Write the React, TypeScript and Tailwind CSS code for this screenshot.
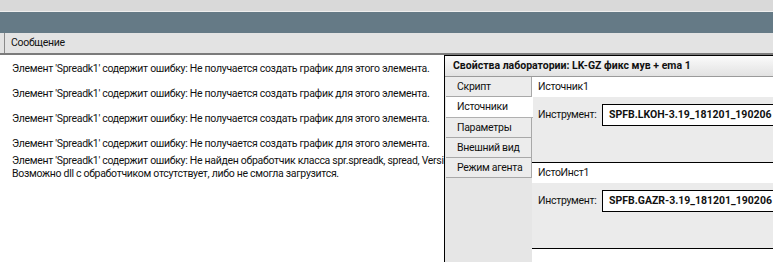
import React from "react";

const msgs = [
  "Элемент 'Spreadk1' содержит ошибку: Не получается создать график для этого элемента.",
  "Элемент 'Spreadk1' содержит ошибку: Не получается создать график для этого элемента.",
  "Элемент 'Spreadk1' содержит ошибку: Не получается создать график для этого элемента.",
  "Элемент 'Spreadk1' содержит ошибку: Не получается создать график для этого элемента.",
];

const tabs = ["Скрипт", "Источники", "Параметры", "Внешний вид", "Режим агента"];

function Section({ title, value }: { title: string; value: string }) {
  return (
    <div className="border-b border-black">
      <div className="h-[20px] bg-white flex items-center pl-[6px]">{title}</div>
      <div className="h-[65px] bg-[#ebebeb] pt-[7px] flex items-start">
        <div className="w-[70px] pl-[6px] h-[21px] flex items-center shrink-0">Инструмент:</div>
        <div className="h-[22px] flex-1 border border-black bg-white flex items-center pl-[6px] font-bold tracking-normal whitespace-nowrap overflow-hidden">
          {value}
        </div>
      </div>
    </div>
  );
}

export default function App() {
  return (
    <div
      className="relative w-[773px] h-[262px] overflow-hidden bg-white text-[10.5px] tracking-[-0.3px] text-[#111111]"
      style={{ fontFamily: 'Roboto, "Noto Sans", sans-serif' }}
    >
      <div className="h-[11px] bg-[#d9d9d9]" />
      <div className="h-px bg-[#eeeeee]" />
      <div className="h-[21px] bg-[#657a86]" />
      <div className="h-[20px] bg-[#e3e3e3] flex items-center">
        <div className="w-[5px] h-full border-r border-[#8a8a8a]" />
        <div className="pl-[6px]">Сообщение</div>
      </div>
      <div className="h-[2px] bg-[#7b7b7b]" />
      <div className="pl-[12px] pt-[7px] leading-[13px] whitespace-nowrap">
        {msgs.map((m, i) => (
          <div key={i} className="mb-[12px]">
            {m}
          </div>
        ))}
        <div className="-mt-[8px]">
          <div>Элемент 'Spreadk1' содержит ошибку: Не найден обработчик класса spr.spreadk, spread, Version=1.0.0.0</div>
          <div>Возможно dll с обработчиком отсутствует, либо не смогла загрузится.</div>
        </div>
      </div>

      <div className="absolute left-[444px] top-[55px] right-0 bottom-0 border-l border-t border-black bg-white flex flex-col">
        <div className="h-[21px] shrink-0 bg-gradient-to-b from-[#fbfbfb] to-[#e2e2e2] border-b border-[#9a9a9a] flex items-center pl-[8px] font-bold tracking-normal whitespace-nowrap">
          Свойства лаборатории: LK-GZ фикс мув + ema 1
        </div>
        <div className="flex flex-1">
          <div className="w-[87px] shrink-0 bg-[#e6e6e6] pl-px">
            {tabs.map((t, i) =>
              i === 1 ? (
                <div key={t} className="h-[21px] w-[87px] bg-white border-b border-[#b0b0b0] flex items-center pl-[11px] relative z-10">
                  {t}
                </div>
              ) : (
                <div key={t} className="h-[20px] w-[86px] bg-[#ececec] border-b border-r border-[#a8a8a8] flex items-center pl-[11px]">
                  {t}
                </div>
              )
            )}
          </div>
          <div className="flex-1 bg-white">
            <Section title="Источник1" value="SPFB.LKOH-3.19_181201_190206 (LKOH)" />
            <Section title="ИстоИнст1" value="SPFB.GAZR-3.19_181201_190206 (GAZR)" />
          </div>
        </div>
      </div>
    </div>
  );
}
